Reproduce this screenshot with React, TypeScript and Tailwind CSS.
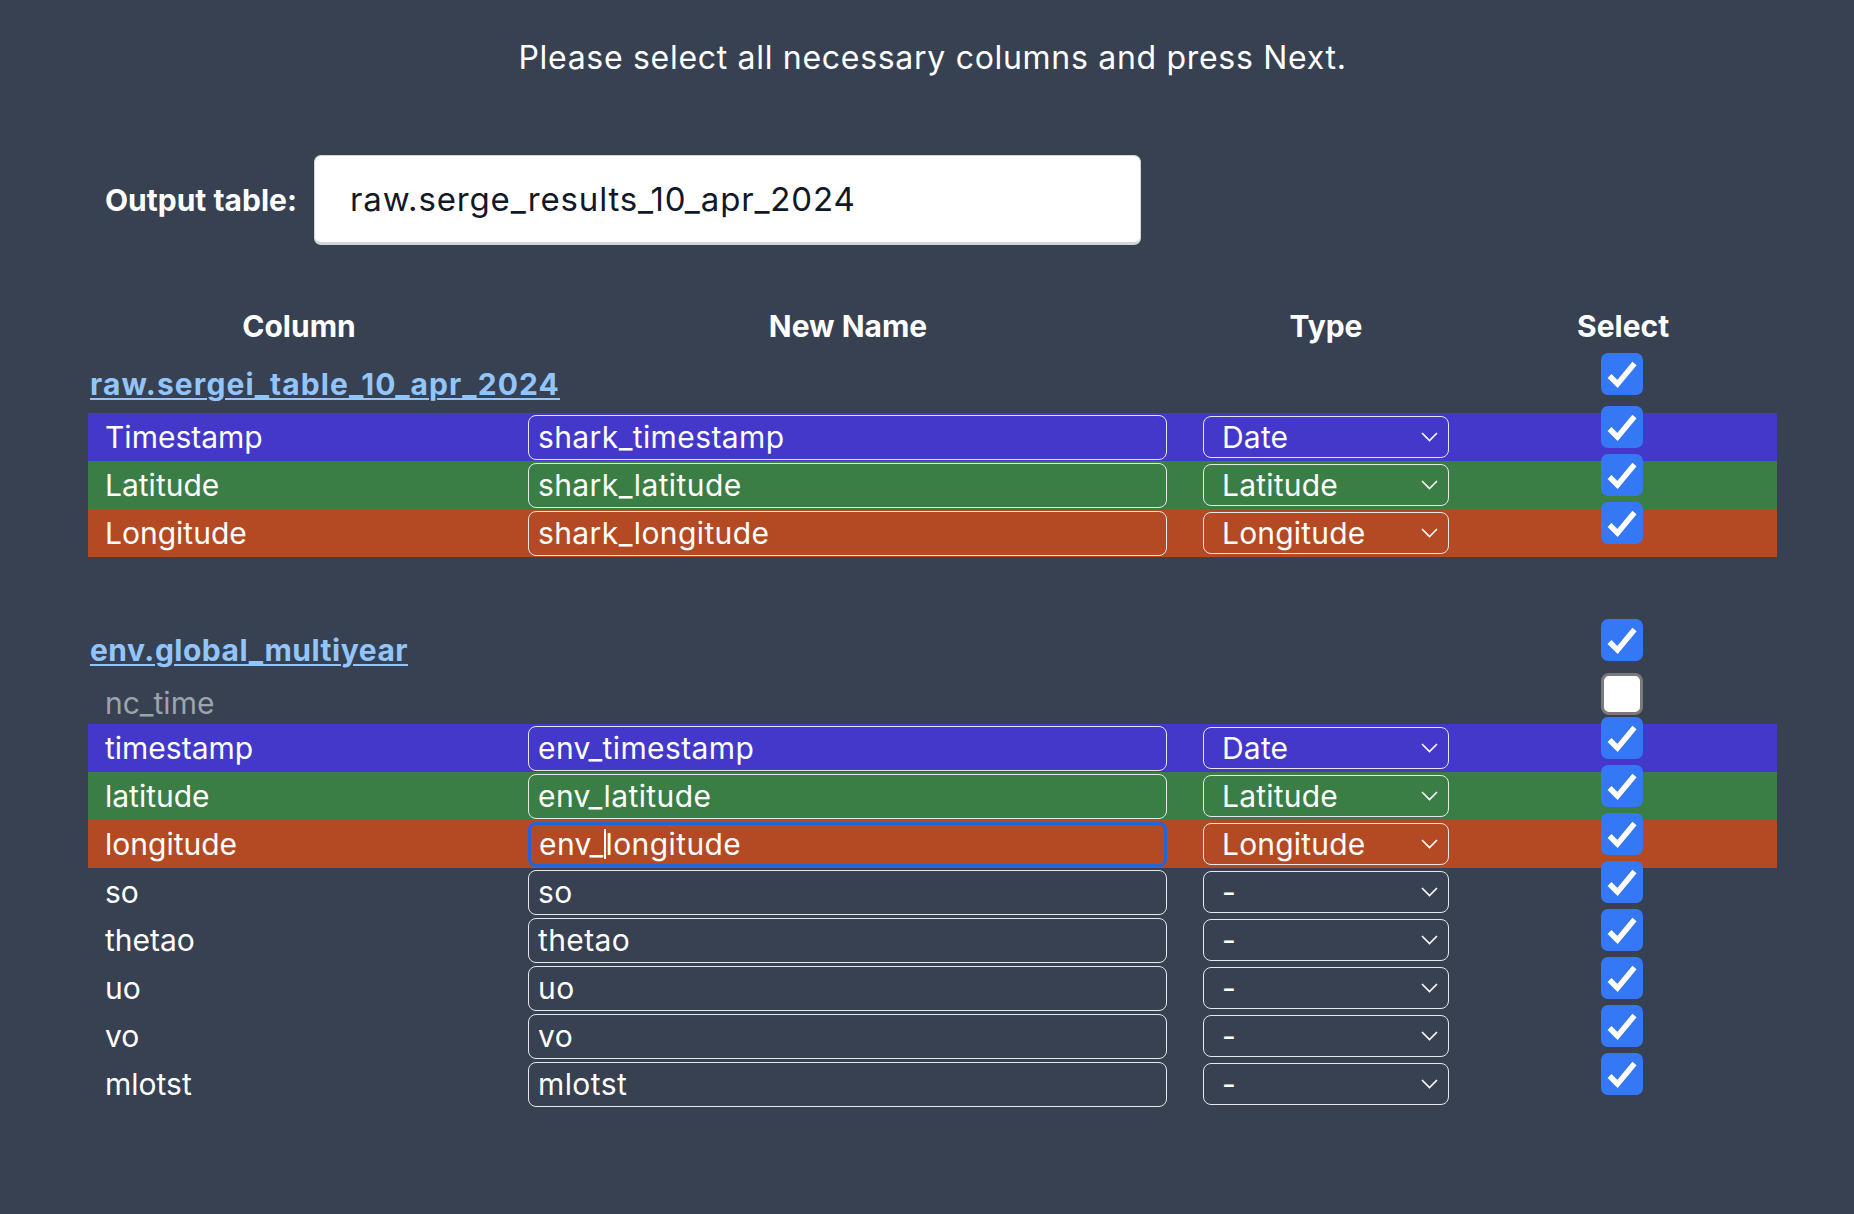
import React from 'react';

type Band = 'blue' | 'green' | 'orange' | 'none';

interface ColumnRow {
  name: string;
  newName: string;
  type: string;
  band: Band;
  focused?: boolean;
}

const bandClass: Record<Band, string> = {
  blue: 'bg-[#4338ca]',
  green: 'bg-[#3b7e45]',
  orange: 'bg-[#b44a24]',
  none: '',
};

const sharkRows: ColumnRow[] = [
  { name: 'Timestamp', newName: 'shark_timestamp', type: 'Date', band: 'blue' },
  { name: 'Latitude', newName: 'shark_latitude', type: 'Latitude', band: 'green' },
  { name: 'Longitude', newName: 'shark_longitude', type: 'Longitude', band: 'orange' },
];

const envRows: ColumnRow[] = [
  { name: 'timestamp', newName: 'env_timestamp', type: 'Date', band: 'blue' },
  { name: 'latitude', newName: 'env_latitude', type: 'Latitude', band: 'green' },
  { name: 'longitude', newName: 'env_longitude', type: 'Longitude', band: 'orange', focused: true },
  { name: 'so', newName: 'so', type: '-', band: 'none' },
  { name: 'thetao', newName: 'thetao', type: '-', band: 'none' },
  { name: 'uo', newName: 'uo', type: '-', band: 'none' },
  { name: 'vo', newName: 'vo', type: '-', band: 'none' },
  { name: 'mlotst', newName: 'mlotst', type: '-', band: 'none' },
];

const Checkbox: React.FC<{ checked: boolean; className?: string }> = ({ checked, className = '' }) => {
  if (!checked) {
    return <div className={`w-[42px] h-[42px] rounded-[8px] bg-white border-[3px] border-[#7a7a7a] ${className}`}></div>;
  }
  return (
    <div className={`w-[42px] h-[42px] rounded-[7px] bg-[#3478f6] flex items-center justify-center ${className}`}>
      <svg width="42" height="42" viewBox="0 0 42 42" fill="none">
        <path d="M8.5 23 L16.5 31 L33.5 10.5" stroke="white" strokeWidth="5.5" strokeLinejoin="miter" />
      </svg>
    </div>
  );
};

const TypeSelect: React.FC<{ value: string }> = ({ value }) => (
  <div className="relative w-[246px] h-[42px]">
    <select
      defaultValue={value}
      className="appearance-none w-full h-full bg-transparent border-[1.5px] border-[#e5e7eb] rounded-[8px] pl-[18px] text-[30px] leading-[36px] tracking-[0.2px] text-white outline-none"
    >
      <option value="-">-</option>
      <option value="Date">Date</option>
      <option value="Latitude">Latitude</option>
      <option value="Longitude">Longitude</option>
    </select>
    <svg className="absolute right-[11px] top-[16px] pointer-events-none" width="17" height="10" viewBox="0 0 17 10" fill="none">
      <polyline points="1,1 8.5,8.5 16,1" stroke="white" strokeWidth="1.6" />
    </svg>
  </div>
);

const NameInput: React.FC<{ value: string; focused?: boolean }> = ({ value, focused }) => {
  if (focused) {
    const head = value.slice(0, 4);
    const tail = value.slice(4);
    return (
      <div className="w-[639px] h-[45px] rounded-[8px] border-[3px] border-[#1f66dd] flex items-center pl-[8px] text-[30px] tracking-[0.4px] text-white">
        <span>{head}</span>
        <span className="inline-block w-[2px] h-[30px] bg-white"></span>
        <span>{tail}</span>
      </div>
    );
  }
  return (
    <input
      defaultValue={value}
      className="w-[639px] h-[45px] bg-transparent border-[1.5px] border-[#e5e7eb] rounded-[8px] px-[9px] text-[30px] tracking-[0.4px] text-white outline-none"
    />
  );
};

const Row: React.FC<{ row: ColumnRow }> = ({ row }) => (
  <div className={`flex h-[48px] ${bandClass[row.band]}`}>
    <div className="w-[440px] flex items-center pl-[17px] text-[30px]">{row.name}</div>
    <div className="w-[640px] flex items-center">
      <NameInput value={row.newName} focused={row.focused} />
    </div>
    <div className="w-[409px] flex items-center pl-[35px]">
      <TypeSelect value={row.type} />
    </div>
    <div className="w-[90px] flex justify-center">
      <Checkbox checked className="-mt-[7px]" />
    </div>
  </div>
);

const GroupHeader: React.FC<{ title: string; spacing: string }> = ({ title, spacing }) => (
  <div className="flex h-[63px]">
    <div className="w-[1489px] flex items-center pt-[6px] pl-[2px]">
      <a href="#" className={`text-[30px] font-bold text-[#93c5fd] underline decoration-2 underline-offset-[3px] ${spacing}`}>
        {title}
      </a>
    </div>
    <div className="w-[90px] flex justify-center">
      <Checkbox checked className="mt-[3px]" />
    </div>
  </div>
);

export default function App() {
  return (
    <div className="min-h-screen bg-[#374151] text-white font-['Inter','Noto_Sans',sans-serif]">
      <h1 className="pt-[39px] pl-[11px] text-center text-[32px] leading-[38px] font-normal tracking-[0.7px]">
        Please select all necessary columns and press Next.
      </h1>

      <div className="mt-[78px] ml-[88px] flex items-center">
        <label className="w-[226px] pl-[17px] text-[30px] font-bold">Output table:</label>
        <input
          defaultValue="raw.serge_results_10_apr_2024"
          className="w-[827px] h-[90px] bg-white text-[#111827] border border-[#d1d5db] border-b-[3px] rounded-[7px] pl-[35px] text-[33px] tracking-[0.85px] outline-none"
        />
      </div>

      <div className="mt-[57px] ml-[88px] w-[1689px]">
        <div className="flex h-[48px] items-center text-[30px] font-bold">
          <div className="w-[440px] text-center pr-[18px]">Column</div>
          <div className="w-[640px] text-center">New Name</div>
          <div className="w-[409px] pl-[35px]">
            <div className="w-[246px] text-center">Type</div>
          </div>
          <div className="w-[90px] text-center">Select</div>
        </div>

        <GroupHeader title="raw.sergei_table_10_apr_2024" spacing="tracking-[1.1px]" />
        {sharkRows.map((r) => (
          <Row key={r.name} row={r} />
        ))}

        <div className="h-[59px]"></div>

        <GroupHeader title="env.global_multiyear" spacing="tracking-[0.5px]" />
        <div className="flex h-[45px]">
          <div className="w-[1489px] flex items-center pt-[4px] pl-[17px] text-[30px] text-[#9ca3af]">nc_time</div>
          <div className="w-[90px] flex justify-center">
            <Checkbox checked={false} className="-mt-[6px]" />
          </div>
        </div>
        {envRows.map((r) => (
          <Row key={r.name} row={r} />
        ))}
      </div>
    </div>
  );
}
